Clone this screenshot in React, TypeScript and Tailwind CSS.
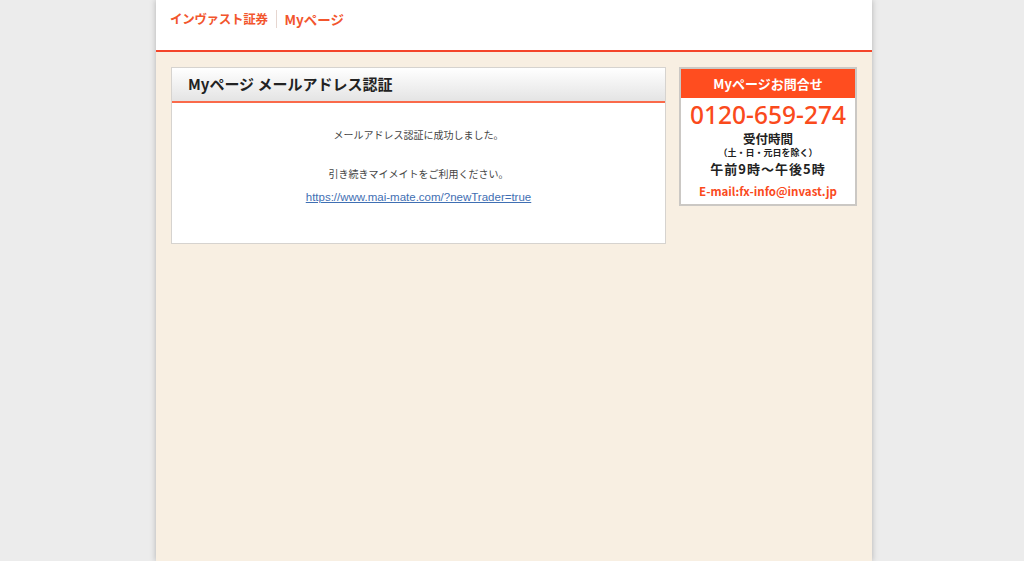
export default function App() {
  const jp = { fontFamily: '"Noto Sans CJK JP", "Noto Sans", sans-serif' };
  return (
    <div className="min-h-[561px] bg-[#ececec]" style={jp}>
      <div className="ml-[156px] w-[716px] min-h-[561px] bg-[#f8efe2] shadow-[0_0_6px_rgba(0,0,0,0.25)]">
        {/* Header */}
        <div className="h-[52px] bg-white border-b-2 border-[#f4452a] flex items-start pt-[9px] pl-[14px]">
          <span className="text-[12.5px] font-bold text-[#f2552d] leading-[20px] tracking-[-0.3px]">インヴァスト証券</span>
          <span className="mx-[8px] mt-[1px] h-[18px] w-px bg-[#e6d6d0]"></span>
          <span className="text-[13.5px] font-bold text-[#f2552d] leading-[20px]">Myページ</span>
        </div>

        <div className="flex gap-[13px] px-[15px] pt-[15px]">
          {/* Main panel */}
          <div className="w-[495px] bg-white border border-[#d6d3cf]">
            <div className="h-[35px] bg-gradient-to-b from-white to-[#e4e4e4] border-b-2 border-[#fa6a4a] flex items-center pl-[16px]">
              <span className="text-[15px] font-bold text-[#222]">Myページ メールアドレス認証</span>
            </div>
            <div className="h-[140px] flex flex-col items-center text-[10px] text-[#444] pt-[24px]">
              <p className="leading-[16px]">メールアドレス認証に成功しました。</p>
              <p className="leading-[16px] mt-[23px]">引き続きマイメイトをご利用ください。</p>
              <a href="#" className="leading-[16px] mt-[7px] text-[#3f6fb3] underline" style={{ fontFamily: '"Liberation Sans", Arial, sans-serif', fontSize: '11.5px' }}>
                https://www.mai-mate.com/?newTrader=true
              </a>
            </div>
          </div>

          {/* Sidebar */}
          <div className="w-[178px] h-[139px] border-2 border-[#cbc8c4] bg-white flex flex-col">
            <div className="h-[29px] bg-[#ff4d1f] flex items-center justify-center">
              <span className="text-[13px] font-bold text-white">Myページお問合せ</span>
            </div>
            <div className="flex flex-col items-center">
              <span className="text-[24.5px] font-medium text-[#fa4a1c] leading-[24px] mt-[5px]" style={{ fontFamily: '"Noto Sans", sans-serif' }}>0120-659-274</span>
              <span className="text-[12.5px] font-bold text-[#222] leading-[16px] mt-[4px]">受付時間</span>
              <span className="text-[9px] font-bold text-[#222] leading-[12px]">（土・日・元日を除く）</span>
              <span className="text-[13px] font-bold text-[#222] leading-[18px] mt-[1px] tracking-[1px]">午前9時～午後5時</span>
              <span className="text-[11.5px] font-bold text-[#fa4a1c] leading-[16px] mt-[5px]">E-mail:fx-info@invast.jp</span>
            </div>
          </div>
        </div>
      </div>
    </div>
  );
}
